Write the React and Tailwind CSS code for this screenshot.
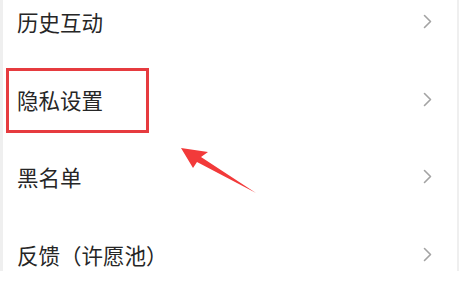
const items = ["历史互动", "隐私设置", "黑名单", "反馈（许愿池）"];

function Chevron() {
  return (
    <svg width="9" height="15" viewBox="0 0 9 15" fill="none">
      <polyline points="1.5,1.5 7.5,7.5 1.5,13.5" stroke="#a3a3a3" strokeWidth="1.6" strokeLinecap="round" strokeLinejoin="round" />
    </svg>
  );
}

export default function App() {
  return (
    <div
      className="relative w-[459px] h-[288px] overflow-hidden bg-white"
      style={{ fontFamily: '"Noto Sans CJK SC", "Noto Sans", sans-serif' }}
    >
      <div className="h-full border-l-[3px] border-r-[2px] border-[#efefef]">
        <div className="-mt-[17px] flex flex-col">
          {items.map((label, i) => (
            <div key={i} className="h-[77.6px] flex items-center justify-between pl-[14px] pr-[25px]">
              <span className="text-[21.5px] text-[#262626] leading-none">{label}</span>
              <Chevron />
            </div>
          ))}
        </div>
      </div>

      {/* annotation box */}
      <div className="absolute left-[6px] top-[68px] w-[143px] h-[65px] border-[3px] border-[#e63b3f]" />

      {/* annotation arrow */}
      <svg className="absolute left-0 top-0" width="459" height="288">
        <polygon points="181,148 208,152 201,157 256,193 197,162 193,168" fill="#f23a3a" />
      </svg>
    </div>
  );
}
